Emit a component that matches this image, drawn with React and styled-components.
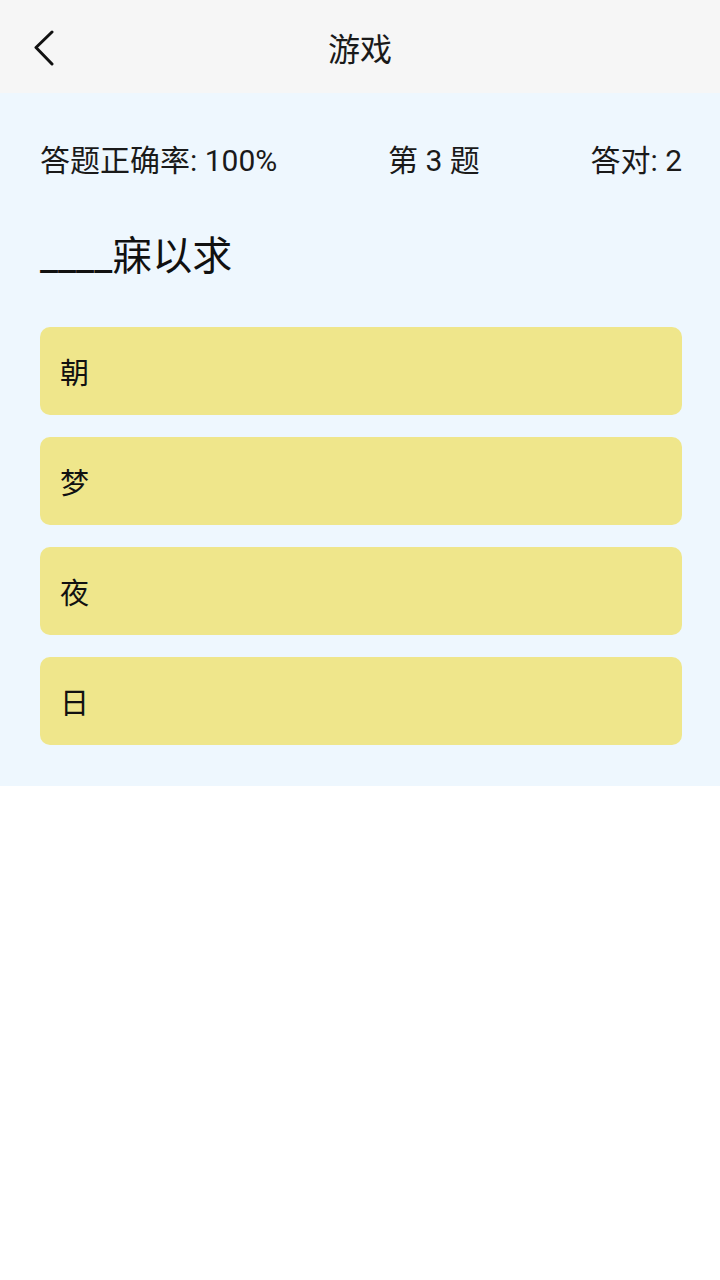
import React from 'react';
import styled, { createGlobalStyle } from 'styled-components';

const GlobalStyle = createGlobalStyle`
  html, body {
    margin: 0;
    padding: 0;
    background: #ffffff;
    font-family: Roboto, "Noto Sans CJK SC", sans-serif;
    color: #111111;
  }
`;

const Header = styled.header`
  display: flex;
  align-items: center;
  justify-content: center;
  position: relative;
  height: 93px;
  background-color: #f6f6f6;
  h1 {
    margin: 0;
    font-size: 32px;
    font-weight: 400;
    color: #1a1a1a;
  }
`;

const BackButton = styled.button`
  position: absolute;
  left: 26px;
  top: 26px;
  width: 36px;
  height: 44px;
  padding: 0;
  border: 0;
  background: none;
  display: flex;
  align-items: center;
  justify-content: center;
`;

const Board = styled.main`
  background-color: #eef7fe;
  padding: 50px 38px 41px 40px;
`;

const Stats = styled.section`
  display: flex;
  justify-content: space-between;
  align-items: center;
  font-size: 30px;
  line-height: 36px;
  color: #1a1a1a;
`;

const Question = styled.p`
  margin: 53px 0 0;
  font-size: 40px;
  line-height: 50px;
  color: #111111;
`;

const Options = styled.ul`
  list-style: none;
  margin: 45px 0 0;
  padding: 0;
  display: flex;
  flex-direction: column;
  gap: 22px;
`;

const Option = styled.li`
  height: 88px;
  display: flex;
  align-items: center;
  padding: 0 20px;
  border-radius: 10px;
  background-color: #efe68b;
  font-size: 29px;
  color: #111111;
`;

const options = ['朝', '梦', '夜', '日'];

function App() {
  return (
    <>
      <GlobalStyle />
      <Header>
        <BackButton title="返回">
          <svg width="24" height="36" viewBox="0 0 24 36" fill="none">
            <path
              d="M20 2 L4 17.5 L20 34"
              stroke="#111"
              strokeWidth="3"
              strokeLinecap="round"
              strokeLinejoin="round"
            />
          </svg>
        </BackButton>
        <h1>游戏</h1>
      </Header>
      <Board>
        <Stats>
          <span>答题正确率: 100%</span>
          <span>第 3 题</span>
          <span>答对: 2</span>
        </Stats>
        <Question>____寐以求</Question>
        <Options>
          {options.map(item => (
            <Option key={item}>{item}</Option>
          ))}
        </Options>
      </Board>
    </>
  );
}

export default App;
